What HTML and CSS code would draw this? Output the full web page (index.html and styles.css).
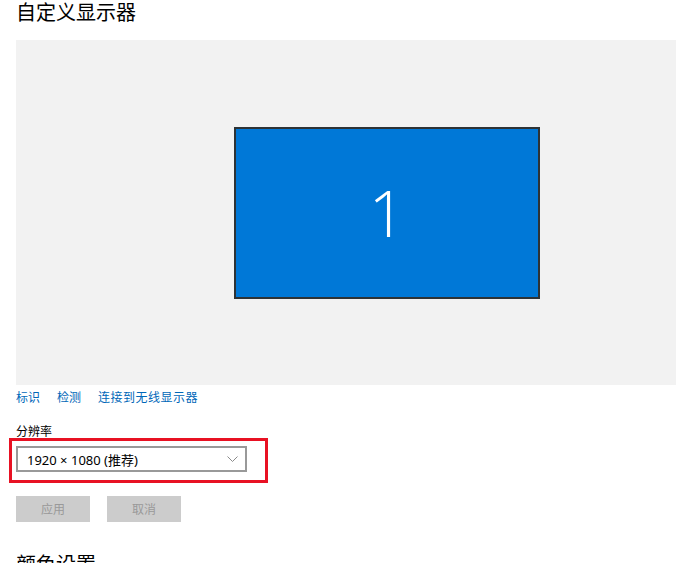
FILE: index.html
```html
<!DOCTYPE html>
<html lang="zh-CN">
<head>
  <meta charset="UTF-8">
  <title>自定义显示器</title>
  <link rel="stylesheet" href="styles.css">
</head>
<body>
  <div class="page">
    <h1 class="title">自定义显示器</h1>
    <div class="preview">
      <div class="monitor">1</div>
    </div>
    <div class="links">
      <a href="#">标识</a>
      <a href="#">检测</a>
      <a href="#">连接到无线显示器</a>
    </div>
    <div class="label">分辨率</div>
    <div class="highlight">
      <div class="select">
        <span>1920 × 1080 (推荐)</span>
        <svg width="11" height="6" viewBox="0 0 11 6"><path d="M0.5 0.5 L5.5 5.5 L10.5 0.5" fill="none" stroke="#8a8a8a" stroke-width="1"/></svg>
      </div>
    </div>
    <div class="buttons">
      <button disabled>应用</button>
      <button disabled>取消</button>
    </div>
    <h2 class="title">颜色设置</h2>
  </div>
</body>
</html>
```
FILE: styles.css
```css
*, *::after {
  margin: 0;
  padding: 0;
  box-sizing: border-box;
}
body {
  background-color: white;
  font-family: "Segoe UI", "Noto Sans", "Noto Sans CJK SC", sans-serif;
  color: #000;
  overflow: hidden;
}
.page {
  padding: 0 1px 0 16px;
}
.title {
  font-weight: 400;
  font-size: 20px;
  line-height: 26px;
}
.preview {
  margin-top: 14px;
  height: 345px;
  background-color: #f2f2f2;
  display: flex;
  align-items: center;
}
.monitor {
  margin-left: 218px;
  width: 306px;
  height: 172px;
  background-color: #0078d7;
  border: 2px solid #2d3336;
  color: white;
  font-family: "Open Sans", "Noto Sans", sans-serif;
  font-weight: 300;
  font-size: 64px;
  display: flex;
  align-items: center;
  justify-content: center;
}
.links {
  margin-top: 5px;
  display: flex;
  gap: 17px;
  font-size: 12px;
  line-height: 16px;
}
.links a {
  color: #0067b8;
  text-decoration: none;
}
.links a:last-child {
  letter-spacing: 0.5px;
}
.label {
  margin-top: 18px;
  font-size: 12px;
  line-height: 16px;
}
.highlight {
  position: relative;
  margin-top: 6px;
  width: 231px;
}
.highlight::after {
  content: "";
  position: absolute;
  left: -7px;
  top: -8px;
  width: 259px;
  height: 45px;
  border: 3px solid #e81123;
}
.select {
  height: 26px;
  border: 2px solid #999;
  display: flex;
  align-items: center;
  justify-content: space-between;
  padding: 0 7px 0 9px;
  font-size: 13px;
}
.buttons {
  margin-top: 24px;
  display: flex;
  gap: 17px;
}
.buttons button {
  width: 74px;
  height: 26px;
  border: none;
  background-color: #cccccc;
  color: #999;
  font-family: inherit;
  font-size: 12px;
}
h2.title {
  margin-top: 30px;
}
```
